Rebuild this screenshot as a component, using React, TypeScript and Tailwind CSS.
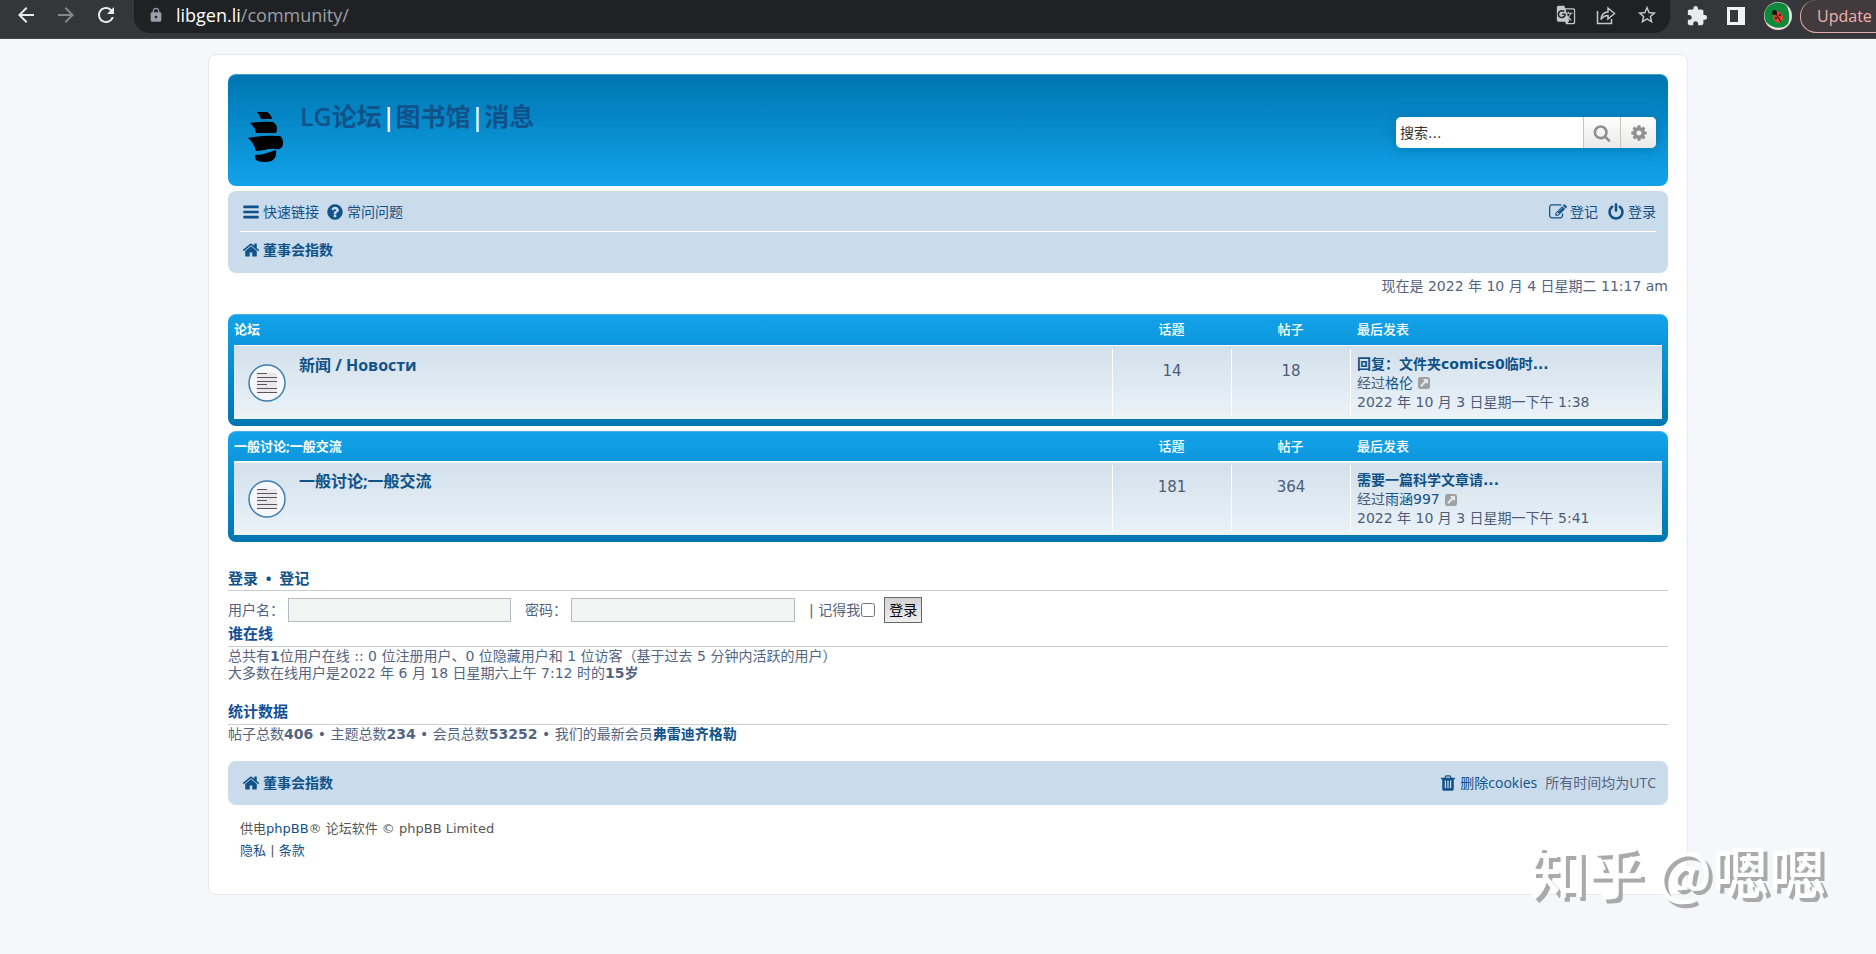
import {
  MdArrowBack,
  MdArrowForward,
  MdExtension,
  MdGTranslate,
  MdLock,
  MdRefresh,
  MdStarBorder
} from "react-icons/md";

const paths = {
  bars: "M1664 1344v128q0 26-19 45t-45 19h-1408q-26 0-45-19t-19-45v-128q0-26 19-45t45-19h1408q26 0 45 19t19 45zm0-512v128q0 26-19 45t-45 19h-1408q-26 0-45-19t-19-45v-128q0-26 19-45t45-19h1408q26 0 45 19t19 45zm0-512v128q0 26-19 45t-45 19h-1408q-26 0-45-19t-19-45v-128q0-26 19-45t45-19h1408q26 0 45 19t19 45z",
  home: "M1472 992v480q0 26-19 45t-45 19h-384v-384h-256v384h-384q-26 0-45-19t-19-45v-480q0-1 .5-3t.5-3l575-474 575 474q1 2 1 6zm223-69l-62 74q-8 9-21 11h-3q-13 0-21-7l-692-577-692 577q-12 8-24 7-13-2-21-11l-62-74q-8-10-7-23.5t11-21.5l719-599q32-26 76-26t76 26l244 204v-195q0-14 9-23t23-9h192q14 0 23 9t9 23v408l219 182q10 8 11 21.5t-7 23.5z",
  question:
    "M1024 1376v-192q0-14-9-23t-23-9h-192q-14 0-23 9t-9 23v192q0 14 9 23t23 9h192q14 0 23-9t9-23zm256-672q0-88-55.5-163t-138.5-116-170-41q-243 0-371 213-15 24 8 42l132 100q7 6 19 6 16 0 25-12 53-68 86-92 34-24 86-24 48 0 85.5 26t37.5 59q0 38-20 61t-68 45q-63 28-115.5 86.5t-52.5 125.5v36q0 14 9 23t23 9h192q14 0 23-9t9-23q0-19 21.5-49.5t54.5-49.5q32-18 49-28.5t46-35 44.5-48 28-60.5 12.5-81zm384 192q0 209-103 385.5t-279.5 279.5-385.5 103-385.5-103-279.5-279.5-103-385.5 103-385.5 279.5-279.5 385.5-103 385.5 103 279.5 279.5 103 385.5z",
  power:
    "M1664 896q0 156-61 298t-164 245-245 164-298 61-298-61-245-164-164-245-61-298q0-182 80.5-343t226.5-270q43-32 95.5-25t83.5 50q32 42 24.5 94.5t-49.5 84.5q-98 74-151.5 181t-53.5 228q0 104 40.5 198.5t109.5 163.5 163.5 109.5 198.5 40.5 198.5-40.5 163.5-109.5 109.5-163.5 40.5-198.5q0-121-53.5-228t-151.5-181q-42-32-49.5-84.5t24.5-94.5q31-43 84-50t95 25q146 109 226.5 270t80.5 343zm-640-768v640q0 52-38 90t-90 38-90-38-38-90v-640q0-52 38-90t90-38 90 38 38 90z",
  search:
    "M1216 832q0-185-131.5-316.5t-316.5-131.5-316.5 131.5-131.5 316.5 131.5 316.5 316.5 131.5 316.5-131.5 131.5-316.5zm512 832q0 52-38 90t-90 38q-54 0-90-38l-343-342q-179 124-399 124-143 0-273.5-55.5t-225-150-150-225-55.5-273.5 55.5-273.5 150-225 225-150 273.5-55.5 273.5 55.5 225 150 150 225 55.5 273.5q0 220-124 399l343 343q37 37 37 90z",
  cog: "M1152 896q0-106-75-181t-181-75-181 75-75 181 75 181 181 75 181-75 75-181zm512-109v222q0 12-8 23t-20 13l-185 28q-19 54-39 91 35 50 107 138 10 12 10 25t-9 23q-27 37-99 108t-94 71q-12 0-26-9l-138-108q-44 23-91 38-16 136-29 186-7 28-36 28h-222q-14 0-24.5-8.5t-11.5-21.5l-28-184q-49-16-90-37l-141 107q-10 9-25 9-14 0-25-11-126-114-165-168-7-10-7-23 0-12 8-23 15-21 51-66.5t54-70.5q-27-50-41-99l-183-27q-13-2-21-12.5t-8-23.5v-222q0-12 8-23t19-13l186-28q14-46 39-92-40-57-107-138-10-12-10-24 0-10 9-23 26-36 98.5-107.5t94.5-71.5q13 0 26 10l138 107q44-23 91-38 16-136 29-186 7-28 36-28h222q14 0 24.5 8.5t11.5 21.5l28 184q49 16 90 37l142-107q9-9 24-9 13 0 25 10 129 119 165 170 7 8 7 22 0 12-8 23-15 21-51 66.5t-54 70.5q26 50 41 98l183 28q13 2 21 12.5t8 23.5z",
  trash:
    "M704 1376v-704q0-14-9-23t-23-9h-64q-14 0-23 9t-9 23v704q0 14 9 23t23 9h64q14 0 23-9t9-23zm256 0v-704q0-14-9-23t-23-9h-64q-14 0-23 9t-9 23v704q0 14 9 23t23 9h64q14 0 23-9t9-23zm256 0v-704q0-14-9-23t-23-9h-64q-14 0-23 9t-9 23v704q0 14 9 23t23 9h64q14 0 23-9t9-23zm-544-992h448l-48-117q-7-9-17-11h-317q-10 2-17 11zm928 32v64q0 14-9 23t-23 9h-96v948q0 83-47 143.5t-113 60.5h-832q-66 0-113-58.5t-47-141.5v-952h-96q-14 0-23-9t-9-23v-64q0-14 9-23t23-9h309l70-167q15-37 54-63t79-26h320q40 0 79 26t54 63l70 167h309q14 0 23 9t9 23z",
  edit: "M888 1184l116-116-152-152-116 116v56h96v96h56zm440-720q-16-16-33 1l-350 350q-17 17-1 33t33-1l350-350q17-17 1-33zm80 594v190q0 119-84.5 203.5t-203.5 84.5h-832q-119 0-203.5-84.5t-84.5-203.5v-832q0-119 84.5-203.5t203.5-84.5h832q63 0 117 25 15 7 18 23 3 17-9 29l-49 49q-14 14-32 8-23-6-45-6h-832q-66 0-113 47t-47 113v832q0 66 47 113t113 47h832q66 0 113-47t47-113v-126q0-13 9-22l64-64q15-15 35-7t20 29zm-96-738l288 288-672 672h-288v-288zm444 132l-92 92-288-288 92-92q28-28 68-28t68 28l152 152q28 28 28 68t-28 68z",
  external:
    "M1408 928v-480q0-26-19-45t-45-19h-480q-42 0-59 39-17 41 14 70l144 144-534 534q-19 19-19 45t19 45l102 102q19 19 45 19t45-19l534-534 144 144q18 19 45 19 12 0 25-5 39-17 39-59zm256-512v960q0 119-84.5 203.5t-203.5 84.5h-960q-119 0-203.5-84.5t-84.5-203.5v-960q0-119 84.5-203.5t203.5-84.5h960q119 0 203.5 84.5t84.5 203.5z"
};

function Icon({ name, className = "size-[18px]" }: { name: keyof typeof paths; className?: string }) {
  return (
    <svg viewBox="0 0 1792 1792" fill="currentColor" aria-hidden="true" className={`shrink-0 ${className}`}>
      <path d={paths[name]} />
    </svg>
  );
}

function BrowserBar() {
  return (
    <div className="flex h-[39px] items-start border-b border-[#4a4b4e] bg-[#35363a] text-[#e8eaed]">
      <div className="flex h-[30px] items-center gap-4 pl-3.5">
        <button aria-label="Back"><MdArrowBack className="size-6" /></button>
        <button aria-label="Forward"><MdArrowForward className="size-6 text-[#85868a]" /></button>
        <button aria-label="Reload"><MdRefresh className="size-6" /></button>
      </div>
      <div className="ml-4 flex h-[33px] flex-1 items-center rounded-b-2xl bg-[#202124] pr-3 pb-[3px] pl-3.5 text-[#c4c7ca]">
        <MdLock className="size-4 text-[#9aa0a6]" />
        <p className="ml-3 flex-1 text-lg leading-7 text-[#9aa0a6]">
          <span className="text-white">libgen.li</span>/community/
        </p>
        <div className="flex items-center gap-5">
          <button aria-label="Translate"><MdGTranslate className="size-5" /></button>
          <button aria-label="Share">
            <svg viewBox="0 0 20 20" className="size-5" fill="none" stroke="currentColor" strokeWidth="1.5">
              <path d="M1.5 6v12.5h14V14" />
              <path d="M5 14.5c.5-5 3-7.500 7-7.500V3l6.500 5.500L12 14v-3.500c-3 0-5 1-7 4z" />
            </svg>
          </button>
          <button aria-label="Bookmark"><MdStarBorder className="size-[22px]" /></button>
        </div>
      </div>
      <div className="flex h-[31px] items-center gap-[17px] pl-4">
        <button aria-label="Extensions"><MdExtension className="size-[22px]" /></button>
        <button aria-label="Side panel">
          <svg viewBox="0 0 22 22" className="size-[22px]">
            <path fill="#f1f3f4" fillRule="evenodd" d="M2 2h18v18H2zM5 5v12h8V5z" />
          </svg>
        </button>
        <button aria-label="Profile">
          <svg viewBox="0 0 28 28" className="size-7">
            <circle cx="14" cy="14" r="14" fill="#f3dfe4" />
            <path d="M2 7a14 14 0 0 1 21-3q4 10 1 18l-4 3Q10 28 2 20q-3-7 0-13z" fill="#0f8a3c" />
            <ellipse cx="14" cy="15" rx="5" ry="6" fill="#e0402c" transform="rotate(-25 14 15)" />
            <circle cx="10.500" cy="10.500" r="2.500" fill="#161616" />
            <path d="M11 10l6 10" stroke="#161616" />
            <circle cx="16" cy="13" r="1" fill="#161616" />
            <circle cx="12" cy="16" r="1" fill="#161616" />
          </svg>
        </button>
      </div>
      <div className="ml-2 w-[76px] overflow-hidden">
        <button className="h-[33px] w-24 rounded-b-2xl rounded-l-2xl border border-t-0 border-[#e6aaa6] bg-[#433a3d] pl-4 text-left text-base text-[#f0b4b0]">
          Update
        </button>
      </div>
    </div>
  );
}

function Header() {
  return (
    <header className="flex h-28 items-start justify-between rounded-lg border-t border-[#3c9fd0] bg-linear-to-b from-[#0076b1] to-[#12a3eb] pr-3 pl-5">
      <div className="flex">
        <a href="#" aria-label="LG" className="mt-[37px]">
          <svg viewBox="0 0 35 50" className="h-[50px] w-[35px]">
            <path d="M9 0h10q4 2 5 7H13Q12 3 9 0z" />
            <path d="M2 11q13-2 23-1 4 3 4 6 0 4-1 5H8Q7 15 2 11z" />
            <path d="M0 26q15-3 32-2 3 2 3 7 0 4-2 5-2 2-5 1-6-1-11 1l-9 1Q6 31 0 26z" />
            <path d="M7 43q7 0 12-2l9-3q1 7-3 10-3 2-9 2-5 0-8-2-1-2-1-5z" />
          </svg>
        </a>
        <h1 className="mt-[25px] ml-[17px] font-['Open_Sans','Noto_Sans_CJK_SC',sans-serif] text-[25px] leading-8 font-semibold text-white">
          <a href="#" className="text-[#105289]">LG论坛</a>|<a href="#" className="text-[#105289]">图书馆</a>|<a href="#" className="text-[#105289]">消息</a>
        </h1>
      </div>
      <form className="mt-[42px] flex h-[31px] overflow-hidden rounded-[5px] bg-white shadow-[0_0_12px_#0075b0]">
        <input
          type="search"
          aria-label="搜索"
          placeholder="搜索..."
          className="w-[187px] px-1 text-sm text-[#333] outline-none placeholder:text-[#333]"
        />
        <button type="button" aria-label="搜索" className="flex w-[37px] items-center justify-center border-l border-[#c7c3bf] bg-linear-to-b from-white to-[#e9e9e9] text-[#8f8f8f]">
          <Icon name="search" />
        </button>
        <button type="button" aria-label="高级搜索" className="flex w-9 items-center justify-center border-l border-[#c7c3bf] bg-linear-to-b from-white to-[#e9e9e9] text-[#8f8f8f]">
          <Icon name="cog" />
        </button>
      </form>
    </header>
  );
}

function Navbar() {
  return (
    <nav className="mt-[5px] h-[82px] rounded-lg bg-[#cadceb] px-3 text-sm text-[#105289]">
      <div className="flex h-[41px] items-center justify-between border-b border-white pt-0.5 pl-0.5">
        <div className="flex gap-[7px]">
          <a href="#" className="flex items-center gap-[3px]"><Icon name="bars" />快速链接</a>
          <a href="#" className="flex items-center gap-[3px]"><Icon name="question" />常问问题</a>
        </div>
        <div className="flex gap-[9px]">
          <a href="#" className="flex items-center gap-[3px]"><Icon name="edit" />登记</a>
          <a href="#" className="flex items-center gap-[3px]"><Icon name="power" />登录</a>
        </div>
      </div>
      <a href="#" className="flex h-9 items-center gap-[3px] pl-0.5 font-bold"><Icon name="home" />董事会指数</a>
    </nav>
  );
}

const forums = [
  {
    category: "论坛",
    name: "新闻 / Новости",
    topics: 14,
    posts: 18,
    last: "回复：文件夹comics0临时...",
    author: "格伦",
    date: "2022 年 10 月 3 日星期一下午 1:38"
  },
  {
    category: "一般讨论;一般交流",
    name: "一般讨论;一般交流",
    topics: 181,
    posts: 364,
    last: "需要一篇科学文章请...",
    author: "雨涵997",
    date: "2022 年 10 月 3 日星期一下午 5:41"
  }
];

function ForumBlock({ forum }: { forum: (typeof forums)[number] }) {
  return (
    <div className="mb-[5px] rounded-lg border-t border-[#4fb0e0] bg-linear-to-b from-[#12a3eb] to-[#0076b1] px-1.5 pb-[7px]">
      <table className="w-full table-fixed border-collapse">
        <colgroup>
          <col />
          <col className="w-[119px]" />
          <col className="w-[119px]" />
          <col className="w-[312px]" />
        </colgroup>
        <thead className="font-['Open_Sans','Noto_Sans_CJK_SC',sans-serif] text-[13px] text-white">
          <tr className="h-[30px]">
            <th className="text-left font-bold">{forum.category}</th>
            <th className="font-medium">话题</th>
            <th className="font-medium">帖子</th>
            <th className="pl-[7px] text-left font-medium">最后发表</th>
          </tr>
        </thead>
        <tbody className="text-sm text-[#4c5d77]">
          <tr className="border-t border-white bg-linear-to-b from-[#d2e0eb] to-[#ecf3f9] align-top">
            <td>
              <div className="flex gap-[13px] pl-3.5">
                <svg viewBox="0 0 38 38" className="mt-[18px] size-[38px]">
                  <circle cx="19" cy="19" r="18" fill="#f6f7fa" stroke="#3f7fb0" strokeWidth="1.500" />
                  <path d="M9 9h20v20H9z" fill="#e9e9ec" />
                  <path
                    d="M9 9.500h10M9 13.500h20M9 17.500h20M9 20.500h10M9 24.500h20M9 28.500h20"
                    stroke="#5c5458"
                  />
                </svg>
                <a href="#" className="mt-[7px] font-['Open_Sans','Noto_Sans_CJK_SC',sans-serif] text-base leading-6 font-bold text-[#105289]">
                  {forum.name}
                </a>
              </div>
            </td>
            <td className="py-[3px]">
              <div className="h-[67px] border-l border-white pt-2.5 text-center text-[15px] leading-6">{forum.topics}</div>
            </td>
            <td className="py-[3px]">
              <div className="h-[67px] border-l border-white pt-2.5 text-center text-[15px] leading-6">{forum.posts}</div>
            </td>
            <td className="py-[3px]">
              <div className="h-[67px] border-l border-white pt-1.5 pl-1.5 leading-[19px]">
                <a href="#" className="block font-bold text-[#105289]">{forum.last}</a>
                <div className="flex items-center">
                  经过<a href="#" className="text-[#105289]">{forum.author}</a>
                  <a href="#" aria-label="查看最新帖子" className="ml-1 text-[#a0a0a0]">
                    <Icon name="external" className="size-3.5" />
                  </a>
                </div>
                <p>{forum.date}</p>
              </div>
            </td>
          </tr>
        </tbody>
      </table>
    </div>
  );
}

function LoginForm() {
  return (
    <form>
      <h2 className="mt-[26px] h-[23px] border-b border-[#ccc] font-['Open_Sans','Noto_Sans_CJK_SC',sans-serif] text-[15px] leading-5 font-bold text-[#105289]">
        <a href="#">登录</a>&nbsp; • &nbsp;<a href="#">登记</a>
      </h2>
      <div className="flex h-[34px] items-center pt-1 text-sm">
        <label htmlFor="username" className="w-[60px]">用户名：</label>
        <input id="username" className="h-6 w-[223px] border border-[#b4bac0] bg-[#f2f3f3] px-1" />
        <label htmlFor="password" className="ml-3.5 w-[46px]">密码：</label>
        <input id="password" type="password" className="h-6 w-[224px] border border-[#b4bac0] bg-[#f2f3f3] px-1" />
        <label htmlFor="remember" className="ml-3.5">| 记得我</label>
        <input id="remember" type="checkbox" className="ml-px size-3.5" />
        <button type="button" className="ml-[9px] h-[26px] w-[38px] border border-[#666] bg-linear-to-b from-[#d2d2d2] to-[#efefef] text-black">登录</button>
      </div>
    </form>
  );
}

export default function App() {
  return (
    <div className="min-h-screen overflow-x-hidden bg-[#f5f7fa] pb-14 font-['DejaVu_Sans','Noto_Sans_CJK_SC',sans-serif] text-[#536482]">
      <div className="font-['Open_Sans','Noto_Sans_CJK_SC',sans-serif]">
        <BrowserBar />
      </div>

      <div className="mt-[15px] pl-5">
        <main className="mx-auto w-[1480px] max-w-full rounded-lg border border-[#e6e9ed] bg-white px-[19px] pt-[19px] pb-8">
          <Header />
          <Navbar />
          <p className="mb-[17px] pt-0.5 text-right text-sm leading-[22px]">现在是 2022 年 10 月 4 日星期二 11:17 am</p>

          {forums.map((forum) => (
            <ForumBlock key={forum.name} forum={forum} />
          ))}

          <LoginForm />

          {/* Who is online */}
          <section className="text-sm leading-[17px]">
            <h2 className="mb-px h-[22px] border-b border-[#ccc] text-[15px] leading-[19px] font-bold text-[#115098]">谁在线</h2>
            <p>总共有<b>1</b>位用户在线 :: 0 位注册用户、0 位隐藏用户和 1 位访客（基于过去 5 分钟内活跃的用户）</p>
            <p>大多数在线用户是2022 年 6 月 18 日星期六上午 7:12 时的<b>15岁</b></p>
          </section>

          {/* Statistics */}
          <section className="mt-5 text-sm leading-[17px]">
            <h2 className="mb-px h-[23px] border-b border-[#ccc] text-[15px] leading-5 font-bold text-[#115098]">统计数据</h2>
            <p>
              帖子总数<b>406</b> • 主题总数<b>234</b> • 会员总数<b>53252</b> • 我们的最新会员
              <a href="#" className="font-bold text-[#105289]">弗雷迪齐格勒</a>
            </p>
          </section>

          <footer>
            <div className="mt-[18px] flex h-11 items-center justify-between rounded-lg bg-[#cadceb] px-3 font-['Open_Sans','Noto_Sans_CJK_SC',sans-serif] text-sm">
              <a href="#" className="flex items-center gap-[3px] pl-0.5 font-bold text-[#105289]"><Icon name="home" />董事会指数</a>
              <div className="flex gap-2">
                <a href="#" className="flex items-center gap-[3px] text-[#105289]"><Icon name="trash" />删除cookies</a>
                <span>所有时间均为UTC</span>
              </div>
            </div>
            <div className="px-3 pt-[13px] text-[13px] leading-[22px] text-[#555]">
              <p>供电<a href="#" className="text-[#105289]">phpBB</a>® 论坛软件 © phpBB Limited</p>
              <p><a href="#" className="text-[#105289]">隐私</a> | <a href="#" className="text-[#105289]">条款</a></p>
            </div>
          </footer>
        </main>
      </div>

      {/* Watermark */}
      <div className="absolute top-[833px] right-[50px] font-['Noto_Sans_CJK_SC',sans-serif] text-[57px] leading-[72px] font-medium text-white [text-shadow:4px_4px_0_#aaa]">
        知乎 @嗯嗯
      </div>
    </div>
  );
}
